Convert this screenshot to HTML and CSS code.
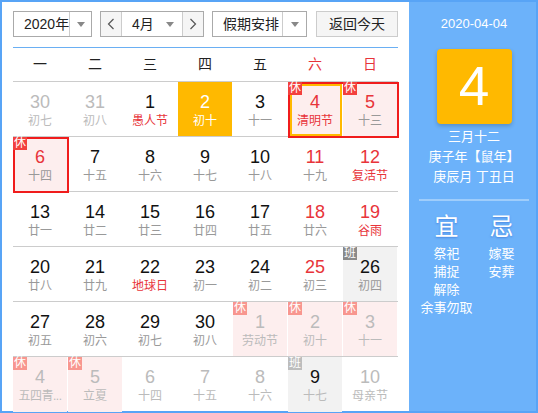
FILE: index.html
```
<!DOCTYPE html>
<html lang="zh-CN">
<head>
	<meta charset="UTF-8">
	<title>万年历</title>
	<link rel="stylesheet" href="styles.css">
</head>
<body>
	<div class="calendar">
		<div class="main">
			<div class="toolbar">
				<div class="select year">
					<span class="select-text">2020年</span>
					<span class="select-arrow"><i class="tri"></i></span>
				</div>
				<div class="month-group">
					<span class="step"><svg width="8" height="12" viewBox="0 0 8 12"><polyline points="6.5,1 1.5,6 6.5,11" fill="none" stroke="#555" stroke-width="1.2"/></svg></span>
					<span class="month"><span class="select-text">4月</span><i class="tri"></i></span>
					<span class="step next"><svg width="8" height="12" viewBox="0 0 8 12"><polyline points="1.5,1 6.5,6 1.5,11" fill="none" stroke="#555" stroke-width="1.2"/></svg></span>
				</div>
				<div class="select holiday">
					<span class="select-text">假期安排</span>
					<span class="select-arrow"><i class="tri"></i></span>
				</div>
				<span class="today-btn">返回今天</span>
			</div>

			<div class="week-head">
				<span>一</span><span>二</span><span>三</span><span>四</span><span>五</span><span class="red">六</span><span class="red">日</span>
			</div>

			<div class="week">
				<div class="day other"><b>30</b><em>初七</em></div>
				<div class="day other"><b>31</b><em>初八</em></div>
				<div class="day fest"><b>1</b><em>愚人节</em></div>
				<div class="day today"><b>2</b><em>初十</em></div>
				<div class="day"><b>3</b><em>十一</em></div>
				<div class="day rest wkend fest sel box-start"><i class="tag">休</i><b>4</b><em>清明节</em></div>
				<div class="day rest wkend box-end"><i class="tag">休</i><b>5</b><em>十三</em></div>
			</div>
			<div class="week">
				<div class="day rest wkend box-start box-end"><i class="tag">休</i><b>6</b><em>十四</em></div>
				<div class="day"><b>7</b><em>十五</em></div>
				<div class="day"><b>8</b><em>十六</em></div>
				<div class="day"><b>9</b><em>十七</em></div>
				<div class="day"><b>10</b><em>十八</em></div>
				<div class="day wkend"><b>11</b><em>十九</em></div>
				<div class="day wkend fest"><b>12</b><em>复活节</em></div>
			</div>
			<div class="week">
				<div class="day"><b>13</b><em>廿一</em></div>
				<div class="day"><b>14</b><em>廿二</em></div>
				<div class="day"><b>15</b><em>廿三</em></div>
				<div class="day"><b>16</b><em>廿四</em></div>
				<div class="day"><b>17</b><em>廿五</em></div>
				<div class="day wkend"><b>18</b><em>廿六</em></div>
				<div class="day wkend fest"><b>19</b><em>谷雨</em></div>
			</div>
			<div class="week">
				<div class="day"><b>20</b><em>廿八</em></div>
				<div class="day"><b>21</b><em>廿九</em></div>
				<div class="day fest"><b>22</b><em>地球日</em></div>
				<div class="day"><b>23</b><em>初一</em></div>
				<div class="day"><b>24</b><em>初二</em></div>
				<div class="day wkend"><b>25</b><em>初三</em></div>
				<div class="day work"><i class="tag ban">班</i><b>26</b><em>初四</em></div>
			</div>
			<div class="week">
				<div class="day"><b>27</b><em>初五</em></div>
				<div class="day"><b>28</b><em>初六</em></div>
				<div class="day"><b>29</b><em>初七</em></div>
				<div class="day"><b>30</b><em>初八</em></div>
				<div class="day other rest"><i class="tag">休</i><b>1</b><em>劳动节</em></div>
				<div class="day other rest"><i class="tag">休</i><b>2</b><em>初十</em></div>
				<div class="day other rest"><i class="tag">休</i><b>3</b><em>十一</em></div>
			</div>
			<div class="week">
				<div class="day other rest"><i class="tag">休</i><b>4</b><em class="cut">五四青...</em></div>
				<div class="day other rest"><i class="tag">休</i><b>5</b><em>立夏</em></div>
				<div class="day other"><b>6</b><em>十四</em></div>
				<div class="day other"><b>7</b><em>十五</em></div>
				<div class="day other"><b>8</b><em>十六</em></div>
				<div class="day other work"><i class="tag ban">班</i><b>9</b><em>十七</em></div>
				<div class="day other"><b>10</b><em>母亲节</em></div>
			</div>
		</div>

		<div class="side">
			<div class="side-date">2020-04-04</div>
			<div class="big-day">4</div>
			<div class="lunar">
				<p>三月十二</p>
				<p>庚子年【鼠年】</p>
				<p>庚辰月 丁丑日</p>
			</div>
			<div class="almanac">
				<div class="col">
					<h3>宜</h3>
					<p>祭祀</p>
					<p>捕捉</p>
					<p>解除</p>
					<p>余事勿取</p>
				</div>
				<div class="col">
					<h3>忌</h3>
					<p>嫁娶</p>
					<p>安葬</p>
				</div>
			</div>
		</div>
	</div>
</body>
</html>
```

FILE: styles.css
```
*{
	box-sizing: border-box;
}
body{
	margin: 0;
	font-family: "Liberation Sans", "Noto Sans CJK SC", sans-serif;
	color: #222;
}
.calendar{
	display: flex;
	width: 538px;
	height: 413px;
	border: 2px solid #58a4f6;
	background: #fff;
}
.main{
	width: 407px;
	padding: 9px 11px 0;
}

/* toolbar */
.toolbar{
	display: flex;
	height: 26px;
	font-size: 14px;
	line-height: 24px;
}
.select,
.month-group{
	display: flex;
	border: 1px solid #aaa;
	background: #fff;
}
.select-text{
	flex: 1;
	padding-left: 10px;
	white-space: nowrap;
}
.select-arrow{
	display: flex;
	align-items: center;
	justify-content: center;
	width: 24px;
	border-left: 1px solid #ccc;
}
.tri{
	display: block;
	width: 0;
	height: 0;
	border-left: 4px solid transparent;
	border-right: 4px solid transparent;
	border-top: 5px solid #888;
}
.year{
	width: 79px;
}
.month-group{
	width: 104px;
	margin-left: 8px;
}
.step{
	display: flex;
	align-items: center;
	justify-content: center;
	width: 21px;
	background: #f5f5f5;
	border-right: 1px solid #ccc;
}
.step.next{
	border-right: 0;
	border-left: 1px solid #ccc;
}
.month{
	display: flex;
	align-items: center;
	width: 60px;
	padding-right: 8px;
}
.holiday{
	width: 95px;
	margin-left: 8px;
}
.today-btn{
	width: 82px;
	margin-left: 9px;
	text-align: center;
	border: 1px solid #ccc;
	background: #f5f5f5;
}

/* week header */
.week-head{
	display: grid;
	grid-template-columns: repeat(7, 54px);
	column-gap: 1px;
	height: 35px;
	margin-top: 10px;
	border-top: 1px solid #6aaff3;
	border-bottom: 1px solid #ccc;
	font-size: 14px;
	line-height: 33px;
	text-align: center;
}
.red{
	color: #e8343a;
}

/* days */
.week{
	display: grid;
	grid-template-columns: repeat(7, 54px);
	column-gap: 1px;
	height: 55px;
	border-bottom: 1px solid #ccc;
}
.week:last-child{
	border-bottom: 0;
}
.day{
	position: relative;
	padding-top: 10px;
	text-align: center;
}
.day b{
	display: block;
	font-weight: normal;
	font-size: 18px;
	line-height: 20px;
	color: #111;
}
.day em{
	display: block;
	margin-top: 1px;
	font-style: normal;
	font-size: 12px;
	line-height: 17px;
	color: #999;
	white-space: nowrap;
	overflow: hidden;
}
.day em.cut{
	letter-spacing: -0.5px;
}
.wkend b{
	color: #e8343a;
}
.fest em{
	color: #e8343a;
}
.rest{
	background: #fdeeee;
}
.work{
	background: #f2f2f2;
}
.other b,
.other em{
	color: #bbb;
}
.other.work b{
	color: #111;
}
.today{
	background: #ffb900;
}
.today b,
.today em{
	color: #fff;
}
.tag{
	position: absolute;
	left: 0;
	top: 0;
	z-index: 2;
	width: 14px;
	height: 13px;
	font-style: normal;
	font-size: 12px;
	line-height: 13px;
	text-align: center;
	color: #fff;
	background: #f3403d;
}
.tag.ban{
	background: #8a8a8a;
}
.other .tag{
	background: #f8968f;
}
.other .tag.ban{
	background: #bdbdbd;
}
.sel::before{
	content: "";
	position: absolute;
	left: 2px;
	top: 2px;
	right: 0;
	bottom: 0;
	border: 2px solid #ffb900;
}
.box-start::after,
.box-end::after{
	content: "";
	position: absolute;
	left: 0;
	top: 0;
	right: -1px;
	bottom: -2px;
	z-index: 1;
	border-top: 2px solid #f01c1c;
	border-bottom: 2px solid #f01c1c;
}
.box-start::after{
	border-left: 2px solid #f01c1c;
}
.box-end::after{
	right: -2px;
	border-right: 2px solid #f01c1c;
}

/* side panel */
.side{
	flex: 1;
	padding: 12px 7px 0 10px;
	background: #6cb2fa;
	color: #fff;
	text-align: center;
	font-size: 13px;
}
.side-date{
	line-height: 20px;
}
.big-day{
	width: 75px;
	height: 75px;
	margin: 15px auto 0;
	border-radius: 4px;
	background: #ffb900;
	box-shadow: 0 2px 4px rgba(0, 0, 0, 0.2);
	font-size: 55px;
	line-height: 75px;
}
.lunar{
	margin-top: 3px;
	padding-bottom: 12px;
	border-bottom: 2px solid #9fcdfb;
}
.lunar p{
	margin: 0;
	line-height: 20px;
}
.almanac{
	display: flex;
	margin-top: 11px;
}
.col{
	width: 55px;
}
.col h3{
	margin: 0 0 3px;
	font-weight: normal;
	font-size: 24px;
	line-height: 30px;
	text-shadow: 0 1px 2px rgba(40, 90, 200, 0.5);
}
.col p{
	margin: 0;
	line-height: 18px;
	white-space: nowrap;
}
```
